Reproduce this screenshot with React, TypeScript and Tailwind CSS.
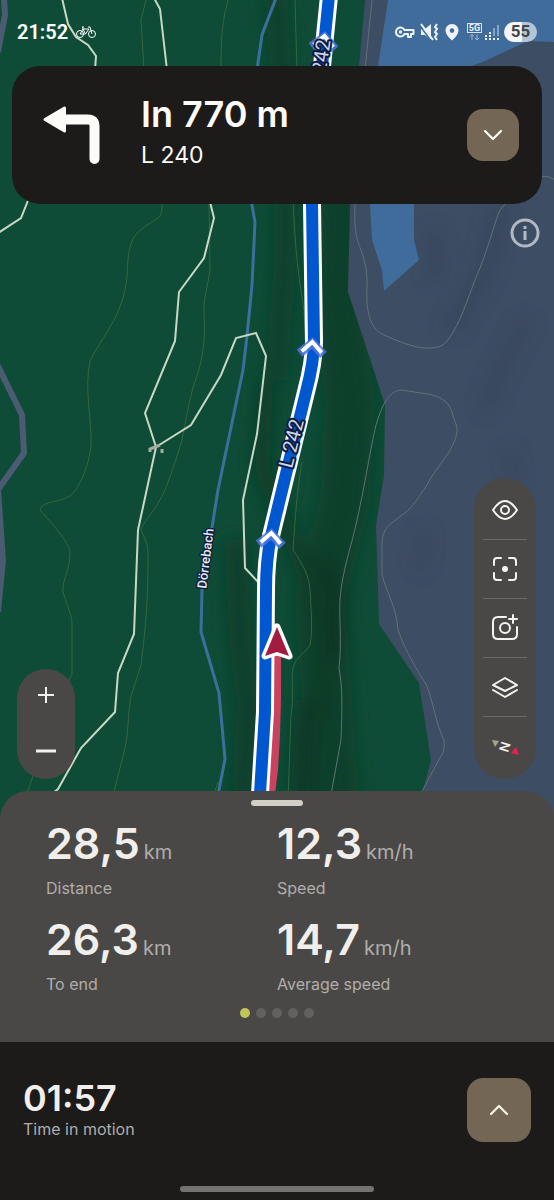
import type { ReactNode } from 'react';
import { ChevronDown, ChevronUp } from 'lucide-react';

interface Stat {
  value: string;
  unit: string;
  label: string;
}

const STATS: Stat[] = [
  { value: '28,5', unit: 'km', label: 'Distance' },
  { value: '12,3', unit: 'km/h', label: 'Speed' },
  { value: '26,3', unit: 'km', label: 'To end' },
  { value: '14,7', unit: 'km/h', label: 'Average speed' },
];

const PAGES = [0, 1, 2, 3, 4];

const ROUTE =
  'M329 -4 L322 66 L312 204 L314 342 Q314 362 306 392 L286 474 L271 536 Q266 560 266 590 L265 712 L259 810';

const TRACKS = [
  'M62 -2 L68 24 L76 37 L88 45 L96 56 L95 70',
  'M154 -2 L160 9 L167 70',
  'M29 198 L21 218 L-2 233',
  'M209 198 L214 218 L204 258 L179 292 L175 341 L145 413 L156 447 L138 530 L134 634 L118 673 L115 712 L81 748 L58 789 L44 800',
  'M156 447 L191 425 L221 375 L236 338 L256 333 L266 356 L257 434 L243 500 L245 568 L259 583',
];

const FOREST_CONTOURS = [
  'M146 0 L141 20 L144 70',
  'M162 200 Q163 214 158 218 C146 226 134 232 131 244 C126 258 129 272 125 290 C119 320 100 340 90 361 C84 390 92 420 91 445 C89 470 76 492 70 496 C55 504 43 500 40 510 C58 530 70 545 70 553 C70 570 62 580 63 592 C70 615 72 615 72 626 V674 L58 704 L26 796',
  'M228 0 C223 20 221 30 221 70',
  'M209 200 L210 270 C207 290 203 300 204 314 C206 340 202 360 197 376 C190 395 190 400 182 440 C170 480 165 490 161 498 C152 515 143 522 141 530 C148 545 148 546 148 560 C148 610 144 640 141 665 L131 696 C127 720 129 730 125 748 L112 800',
  'M295 0 L297 70',
  'M293 200 C295 250 299 280 304 310 L306 350',
  'M302 462 C297 490 295 520 293 550 C303 565 309 575 310 590 C311 610 313 630 310 645 C304 655 296 656 293 668 C291 685 294 700 291 715 L288 800',
  'M212 800 L218 782',
];

const SLATE_CONTOURS = [
  'M372 0 L365 70',
  'M355 200 C354 230 356 238 361 250 C370 275 366 285 367 303 C369 325 376 331 384 335 Q410 347 424 348 C445 349 446 342 452 334 C464 315 470 290 480 268 C489 245 494 225 499 212 Q503 204 512 200',
  'M538 176 Q548 175 556 180',
  'M330 800 L341 740 C342 710 343 690 339 668 C342 640 339 620 340 600 C342 570 352 545 357 520 C366 480 370 450 376 425 C384 398 392 391 401 390 L428 394 C444 397 451 405 453 416 Q458 428 457 432 C455 450 437 465 427 485 C415 503 410 510 402 515 C390 525 382 527 382 545 V574 C387 595 396 605 398 630 C405 650 418 672 426 684 C433 700 436 725 444 740 Q445 752 441 756 L420 795',
];

function RouteChevron({ x, y, rotate = 0 }: { x: number; y: number; rotate?: number }) {
  return (
    <g transform={`translate(${x} ${y}) rotate(${rotate})`} fill="none">
      <path d="M-12 7 L0 -4 L12 7" stroke="#4f75dc" strokeWidth="9" opacity=".85" />
      <path d="M-10 5 L0 -5 L10 5" stroke="#fff" strokeWidth="4" />
    </g>
  );
}

function MapCanvas() {
  return (
    <svg
      className="absolute inset-0 h-full w-full"
      viewBox="0 0 554 820"
      preserveAspectRatio="xMidYMin slice"
      role="img"
      aria-label="Map"
    >
      <defs>
        <filter id="relief" x="-50%" y="-50%" width="200%" height="200%">
          <feGaussianBlur stdDeviation="9" />
        </filter>
      </defs>
      <rect width="554" height="820" fill="#0f4c37" />

      {/* valley shading */}
      <g filter="url(#relief)" fill="none">
        <path d="M275 -10 L285 120 L285 260 L276 380" stroke="#0a3f2a" strokeWidth="22" />
        <path d="M345 190 L338 300 L350 400 L345 500 L320 600 L335 820" stroke="#0b412c" strokeWidth="50" />
        <path d="M266 380 L262 470 L300 560 L330 640 L322 720" stroke="#0a3b28" strokeWidth="16" />
        <path d="M236 540 L240 640 L248 700 L242 820" stroke="#0a3c29" strokeWidth="22" />
        <path d="M322 560 L338 600 L332 660" stroke="#093322" strokeWidth="14" />
        <path d="M305 700 L300 820" stroke="#0a3828" strokeWidth="20" />
      </g>

      <path
        d="M365 0 L359 66 L350 204 L348 292 L377 380 L385 405 L384 475 L376 525 L379 624 L419 683 L431 760 L419 806 L416 820 H554 V0 Z"
        fill="#3d4d63"
      />
      <g filter="url(#relief)" fill="none" stroke="#34455a" opacity=".8">
        <path d="M433 230 L436 280" strokeWidth="14" />
        <path d="M500 205 L485 270 L450 330" strokeWidth="16" />
        <path d="M527 320 L500 370 L484 410" strokeWidth="12" />
        <path d="M508 450 L516 480" strokeWidth="10" />
        <path d="M425 530 L420 570" strokeWidth="9" />
      </g>
      <path
        d="M388 0 L378 66 L370 204 L372 240 L382 270 L384 291 L419 260 L414 240 L414 204 L440 90 L472 66 L485 61 L528 41 L554 42 V0 Z"
        fill="#3f6c9b"
      />

      <g fill="none" strokeWidth="1">
        {FOREST_CONTOURS.map((d) => (
          <path key={d} d={d} stroke="#35663f" />
        ))}
        {SLATE_CONTOURS.map((d) => (
          <path key={d} d={d} stroke="#5f7375" />
        ))}
      </g>

      <g fill="none" stroke="#4b5b72" strokeWidth="6">
        <path d="M4 -2 L5 15 L-2 52" />
        <path d="M-3 364 L22 415 L24 453 L-3 491" />
        <path d="M-2 490 L3 560 L-2 612" />
      </g>

      <path
        d="M276 -2 L262 35 L254 90 L251 200 L255 222 L252 285 L247 336 L243 370 L218 490 L202 590 L201 632 L219 693 L225 759 L216 805"
        fill="none"
        stroke="#3a709b"
        strokeWidth="3"
      />

      <g fill="none" stroke="#c8d7c6" strokeWidth="2">
        {TRACKS.map((d) => (
          <path key={d} d={d} />
        ))}
      </g>

      {/* bridge */}
      <g fill="none" stroke="#a5aea1" strokeWidth="2">
        <path d="M150 452 V449 L160 445" strokeWidth="3" />
        <path d="M162 449 V453" strokeWidth="3" />
      </g>

      {/* ridden part, then the planned route */}
      <path
        d="M276 640 L276 700 L275 735 L273 770 L268 810"
        fill="none"
        stroke="#c9425f"
        strokeWidth="10"
      />
      <path d={ROUTE} fill="none" stroke="#fff" strokeWidth="18" />
      <path d={ROUTE} fill="none" stroke="#0057cf" strokeWidth="12" />

      <RouteChevron x={324} y={41} rotate={6} />
      <RouteChevron x={312} y={347} rotate={4} />
      <RouteChevron x={271} y={538} rotate={4} />

      <g fontFamily="Roboto, sans-serif" textAnchor="middle" strokeLinejoin="round" paintOrder="stroke">
        <g fontSize="20" fill="#c9d4ee" stroke="#0e1a3c" strokeWidth="4">
          <text transform="translate(327 65) rotate(-82)">L 242</text>
          <text transform="translate(298 445) rotate(-76)">L 242</text>
        </g>
        <text
          transform="translate(210 559) rotate(-83)"
          fontSize="13"
          fontWeight="500"
          fill="#e6e9f2"
          stroke="#10203f"
          strokeWidth="3"
        >
          Dörrebach
        </text>
      </g>

      <path
        d="M277 627 L289 656 L277 652 L265 656 Z"
        fill="#a31c40"
        stroke="#fff"
        strokeWidth="7"
        strokeLinejoin="round"
        paintOrder="stroke"
      />
    </svg>
  );
}

function BicycleIcon() {
  return (
    <svg width="20" height="13" viewBox="0 0 20 13" fill="none" stroke="currentColor" strokeWidth="1" aria-hidden="true">
      <circle cx="4" cy="8" r="3.5" />
      <circle cx="16" cy="8" r="3.5" />
      <path d="M4 8 L7 3 H13 L9.500 8 H4 M7 3 L9.500 8 M12 1 H14 L16 8 M6 1 H8 M6.500 1 L7 3" />
    </svg>
  );
}

function StatusIcons() {
  return (
    <svg width="105" height="20" viewBox="0 0 105 20" aria-hidden="true">
      {/* vpn key */}
      <g fill="none" stroke="#eef3f8" strokeWidth="2" strokeLinejoin="round">
        <path d="M9.500 8 A4.500 4.500 0 1 0 9.500 12 H13 V15 H16 V12 H18.500 V8 Z" />
        <circle cx="5.500" cy="10" r="1" strokeWidth="1.500" />
      </g>
      {/* muted speaker */}
      <path d="M26 7 H30 L36 2 V18 L30 13 H26 Z" fill="#eef3f8" />
      <path d="M25 4 L37 20" stroke="#3f6c9b" strokeWidth="1.500" />
      <path d="M26 2 L38 18" stroke="#eef3f8" strokeWidth="2" />
      <path d="M42 2 l-2 3 2 2 -2 3 2 2 -2 3 2 3" fill="none" stroke="#eef3f8" strokeWidth="2" />
      {/* location pin */}
      <path
        fillRule="evenodd"
        d="M57 2 C53 2 50.500 5 50.500 8.500 C50.500 13 57 18.500 57 18.500 C57 18.500 63.500 13 63.500 8.500 C63.500 5 61 2 57 2 Z M57 6.300 A2.300 2.300 0 1 1 57 10.900 A2.300 2.300 0 1 1 57 6.300 Z"
        fill="#eef3f8"
      />
      <rect x="72.500" y="1.500" width="14" height="9" fill="none" stroke="#d7e2ee" />
      <text x="79.500" y="9" textAnchor="middle" fontFamily="Roboto, sans-serif" fontWeight="700" fontSize="9" fill="#eef3f8">
        5G
      </text>
      <path
        d="M77 18 V12.500 M75 14.500 L77 12.500 L79 14.500 M82 12.500 V18 M80 16 L82 18 L84 16"
        fill="none"
        stroke="#9cb4cd"
        strokeWidth="1"
      />
      {/* signal */}
      <g strokeWidth="2" strokeDasharray="2 1">
        <path d="M91 18 V13" stroke="#eef3f8" />
        <path d="M95 18 V10" stroke="#eef3f8" />
        <path d="M99 18 V15" stroke="#eef3f8" />
        <path d="M103 18 V15" stroke="#eef3f8" />
      </g>
      <path d="M99 14 V6 M103 14 V3" stroke="#86a3c1" strokeWidth="2" />
    </svg>
  );
}

function StatusBar() {
  return (
    <div className="relative flex h-16 items-center justify-between px-[17px] text-white">
      <div className="flex items-center gap-2">
        <span className="font-[Roboto,sans-serif] text-[20px] font-semibold">21:52</span>
        <BicycleIcon />
      </div>
      <div className="flex items-center gap-1">
        <StatusIcons />
        <span className="flex h-5 w-[33px] items-center justify-center rounded-full bg-linear-to-r from-[#f3f5f8] from-55% to-[#b4c5d8] to-55% font-[Roboto,sans-serif] text-[17px] font-bold text-[#454545]">
          55
        </span>
      </div>
    </div>
  );
}

function TurnCard() {
  return (
    <section className="relative mx-3 mt-0.5 flex h-[138px] items-center rounded-[28px] bg-[#1c1b19] pr-[23px] pl-[30px] text-[#fdfbf7]">
      <svg width="60" height="60" viewBox="0 0 60 60" aria-label="Turn left" role="img">
        <path d="M22 14.500 H46 Q52.500 14.500 52.500 21 V54" fill="none" stroke="currentColor" strokeWidth="10" strokeLinecap="round" />
        <path d="M3 14.500 L22.500 3 V26 Z" fill="currentColor" stroke="currentColor" strokeWidth="3" strokeLinejoin="round" />
      </svg>
      <div className="ml-[39px] flex-1 pb-1.5">
        <h1 className="text-[36px] leading-10 font-semibold">In 770 m</h1>
        <p className="mt-1.5 text-[23px] leading-[30px]">L 240</p>
      </div>
      <button
        type="button"
        aria-label="Expand directions"
        className="flex size-[52px] items-center justify-center rounded-2xl bg-[#736654]"
      >
        <ChevronDown size={32} strokeWidth={1.6} />
      </button>
    </section>
  );
}

function ZoomControls() {
  return (
    <div className="flex h-[110px] w-[58px] flex-col rounded-full bg-[#4a4846] text-[#f3f1ee]">
      <button type="button" aria-label="Zoom in" className="flex flex-1 items-center justify-center">
        <svg width="20" height="20" viewBox="0 0 20 20" stroke="currentColor" strokeWidth="2">
          <path d="M2 8 H18 M10 0 V16" />
        </svg>
      </button>
      <button type="button" aria-label="Zoom out" className="flex flex-1 items-center justify-center">
        <svg width="20" height="20" viewBox="0 0 20 20" stroke="currentColor" strokeWidth="3">
          <path d="M0 9 H20" />
        </svg>
      </button>
    </div>
  );
}

const TOOLS: { label: string; icon: ReactNode }[] = [
  {
    label: 'View',
    icon: (
      <>
        <path d="M2 14 C6 8 10 5 14 5 C18 5 22 8 26 14 C22 20 18 23 14 23 C10 23 6 20 2 14 Z" />
        <circle cx="14" cy="14" r="4" />
      </>
    ),
  },
  {
    label: 'Centre',
    icon: (
      <>
        <path d="M3 10 V6 Q3 3 6 3 H10 M18 3 H22 Q25 3 25 6 V10 M25 18 V22 Q25 25 22 25 H18 M10 25 H6 Q3 25 3 22 V18" />
        <circle cx="14" cy="14" r="2" fill="currentColor" />
      </>
    ),
  },
  {
    label: 'Add photo',
    icon: (
      <>
        <path d="M15 3 H7 Q2 3 2 8 V20 Q2 25 7 25 H21 Q26 25 26 20 V13" />
        <circle cx="14" cy="14" r="5" />
        <path d="M22 1 V9 M18 5 H26" />
      </>
    ),
  },
  {
    label: 'Layers',
    icon: (
      <>
        <path d="M14 5 L26 12 L14 18 L2 12 Z" />
        <path d="M2 17 L14 24 L26 17" />
      </>
    ),
  },
];

function MapToolbar() {
  return (
    <div className="flex w-[62px] flex-col items-center rounded-full bg-[#4a4846] py-[3px] text-[#f6f3ef]">
      {TOOLS.map((tool) => (
        <button
          key={tool.label}
          type="button"
          aria-label={tool.label}
          className="flex h-[59px] w-11 items-center justify-center border-b border-[#6b6866]"
        >
          <svg width="28" height="28" viewBox="0 0 28 28" fill="none" stroke="currentColor" strokeWidth="2" strokeLinejoin="round" strokeLinecap="round">
            {tool.icon}
          </svg>
        </button>
      ))}
      <button type="button" aria-label="Compass" className="flex h-[59px] w-11 items-center justify-center">
        <svg width="28" height="28" viewBox="0 0 28 28">
          <path d="M1 7 L8 8 L4 14 Z" fill="#a8a486" />
          <path d="M25 14 L28 22 L20 20 Z" fill="#ea1f4c" />
          <text
            transform="translate(14 14) rotate(107)"
            y="5"
            textAnchor="middle"
            fontFamily="Inter, sans-serif"
            fontWeight="600"
            fontSize="13"
            fill="currentColor"
          >
            N
          </text>
        </svg>
      </button>
    </div>
  );
}

function StatsSheet() {
  return (
    <section className="relative -mt-7 flex flex-col rounded-t-[28px] bg-[#4a4846] px-[46px] pt-[9px] pb-6">
      <div className="h-1.5 w-[52px] self-center rounded-full bg-[#d1cdc7]" />
      <dl className="mt-3.5 grid grid-cols-2 gap-y-4">
        {STATS.map((stat) => (
          <div key={stat.label} className="flex flex-col-reverse gap-2.5">
            <dt className="text-[16px] leading-6 text-[#b0adaa]">{stat.label}</dt>
            <dd className="flex items-baseline gap-1">
              <span className="text-[43px] leading-[46px] font-semibold text-[#f1efec]">{stat.value}</span>
              <span className="text-[20px] leading-6 text-[#b0adaa]">{stat.unit}</span>
            </dd>
          </div>
        ))}
      </dl>
      <div className="mt-3 flex justify-center gap-1.5">
        {PAGES.map((page) => (
          <span
            key={page}
            className={`size-2.5 rounded-full ${page === 0 ? 'bg-[#c1c456]' : 'bg-[#63605e]'}`}
          />
        ))}
      </div>
    </section>
  );
}

function Footer() {
  return (
    <footer className="relative flex flex-col bg-[#1c1b19] pt-9 pb-2">
      <div className="flex items-center justify-between px-[23px]">
        <div>
          <div className="text-[36px] leading-[38px] font-semibold text-[#f1efec]">01:57</div>
          <div className="text-[16px] leading-6 text-[#b0adaa]">Time in motion</div>
        </div>
        <button
          type="button"
          aria-label="Show more"
          className="flex size-16 items-center justify-center rounded-2xl bg-[#736654] text-[#fdf6ea]"
        >
          <ChevronUp size={32} strokeWidth={1.6} />
        </button>
      </div>
      <div className="mt-11 h-1.5 w-[35%] self-center rounded-full bg-[#747372]" />
    </footer>
  );
}

export default function App() {
  return (
    <div className="flex min-h-screen flex-col bg-[#1c1b19] font-[Inter,sans-serif]">
      <main className="relative flex min-h-[640px] flex-1 flex-col overflow-hidden pb-10">
        <MapCanvas />
        <StatusBar />
        <TurnCard />
        <button type="button" aria-label="Map information" className="relative mt-3.5 mr-3.5 self-end text-[#b3b9c2]">
          <svg width="30" height="30" viewBox="0 0 30 30" fill="none" stroke="currentColor" strokeWidth="3">
            <circle cx="15" cy="15" r="13" />
            <path d="M15 13 V22 M15 8 V11" />
          </svg>
        </button>
        <div className="relative mt-auto flex items-end justify-between pr-[18px] pl-[17px]">
          <ZoomControls />
          <MapToolbar />
        </div>
      </main>
      <StatsSheet />
      <Footer />
    </div>
  );
}
